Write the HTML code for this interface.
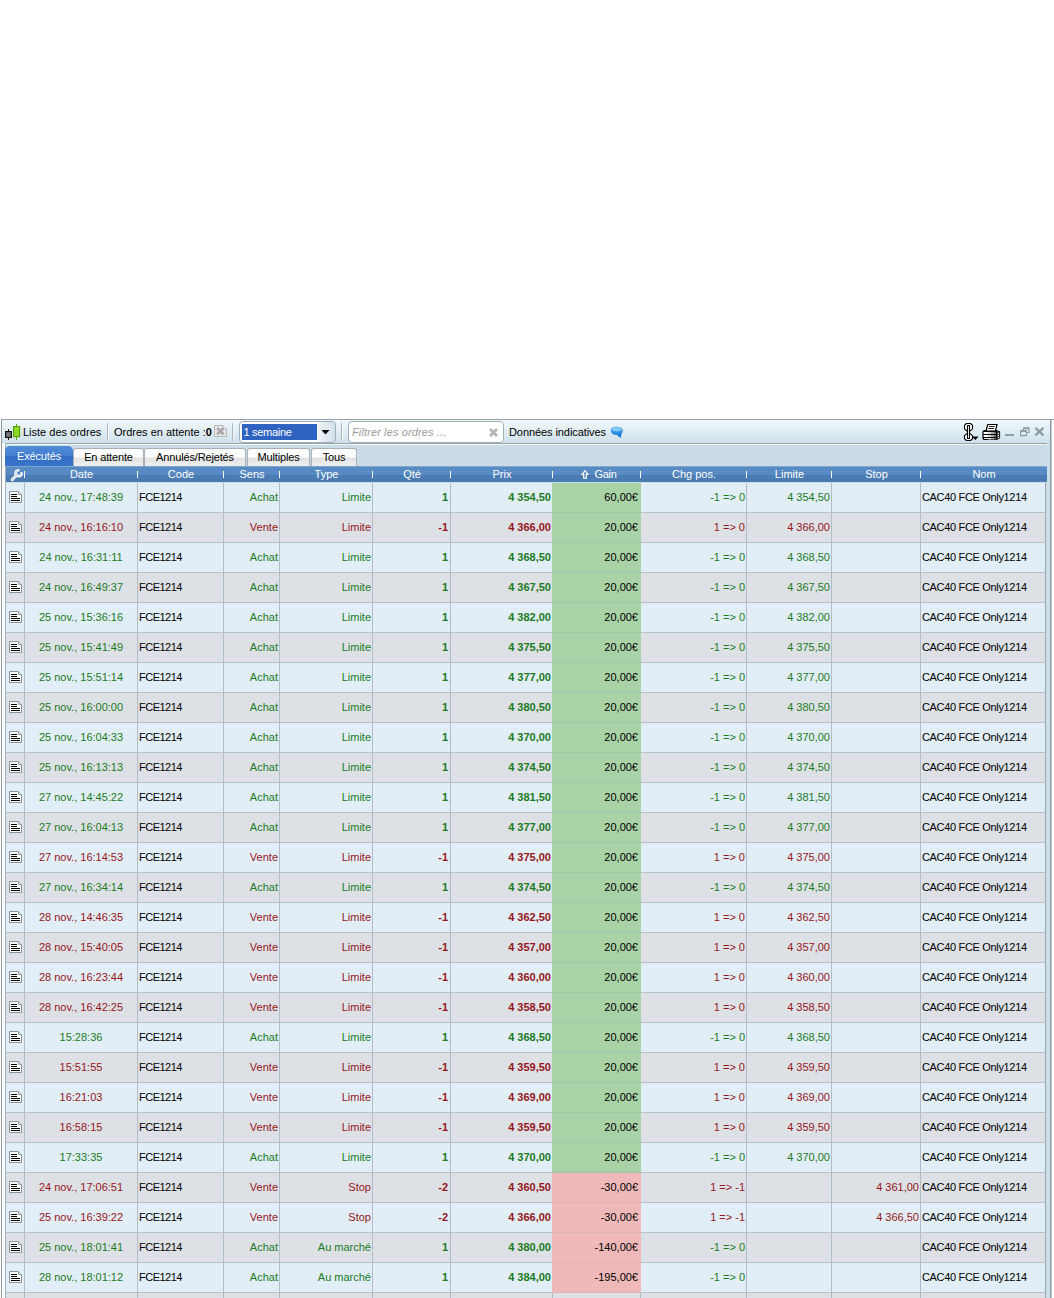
<!DOCTYPE html><html><head><meta charset="utf-8"><title>Liste des ordres</title><style>*{box-sizing:border-box;margin:0;padding:0}
html,body{width:1054px;height:1298px;overflow:hidden;background:#fff}
body{font-family:"Liberation Sans",Arial,sans-serif;font-size:11px;color:#000;position:relative}
.a{position:absolute}
.frame{position:absolute;left:1px;top:419px;width:1050px;height:900px;border-left:1px solid #8f989f;border-right:1px solid #8a98a2;background:#fbfcfd;box-shadow:1px 0 0 #c3ccd3}
.topline{position:absolute;left:1px;top:419px;width:1053px;height:1px;background:#979fa6}
.tbbg{position:absolute;left:2px;top:420px;width:1048px;height:23px;background:linear-gradient(#f1f8fb,#e3eff5 40%,#cfe0ea)}
.rstrip{position:absolute;left:1047px;top:443px;width:3px;height:900px;background:#cedee8}
.panel{position:absolute;left:5px;top:443px;width:1042px;height:900px;background:#cbdce7;border-left:1px solid #a3b0bb;border-top:1px solid #98a4ad}
.panel:before{content:"";position:absolute;left:0;top:0;width:100%;height:1px;background:#f2f7fa}
.tb span,.tb div{position:absolute;white-space:nowrap}
.t{top:426px;line-height:13px;font-size:11px}
.vsep{top:423px;width:1px;height:18px;background:#aab5be;box-shadow:1px 0 0 #f7fafc}
.tab{position:absolute;top:448px;height:18px;border:1px solid #a7b1ba;border-bottom:none;border-radius:3px 3px 0 0;background:linear-gradient(#fff,#fff 45%,#e2e2e2 55%,#efefef);font-size:11px;line-height:17px;text-align:center;color:#000;letter-spacing:-0.15px}
.tab.sel{top:446px;height:20px;border:none;border-radius:5px 5px 0 0;background:linear-gradient(#4f8ad6,#437fd0 50%,#316dc3 52%,#3975ca);color:#fff;line-height:20px}
.hdr{position:absolute;left:6px;top:466px;width:1041px;height:16px;background:linear-gradient(#7fa5d1,#7fa5d1 1px,#588bc3 1px,#588bc3 9px,#4a7bb3 9px,#4a7bb3);color:#fff;font-size:11px}
.hline{position:absolute;left:6px;top:482px;width:1041px;height:1px;background:#eef4f9}
.hc{position:absolute;top:0;height:16px;line-height:16px;text-align:center;white-space:nowrap;padding-left:2px}
.hs{position:absolute;top:5px;width:1px;height:7px;background:#fff}
.wrench{position:absolute;left:4px;top:2px}
.arr{font-family:"DejaVu Sans",sans-serif;font-size:10px}
.grid{position:absolute;left:6px;top:483px;width:1041px;height:830px;overflow:hidden}
.r{position:absolute;left:0;width:1041px;height:30px}
.r.o .c_{background:#e1eef7}
.r.e .c_{background:#dde1e6}
.c_{position:absolute;top:0;height:30px;line-height:29px;border-left:1px solid #b3bcc4;border-bottom:1px solid #b8c0c7;white-space:nowrap;overflow:hidden;padding:0 1px 0 1px}
.r .c_:first-child{border-left:none}
.r .c_:last-child{border-right:1px solid #9aa8b3}
.c{text-align:center}.l{text-align:left}.rt{text-align:right}.b{font-weight:bold}
.g .c_{color:#1b7a1d}.d .c_{color:#96151a}
.r .c_.k{color:#000}
.r .c_.pos{background:#a9d3a6;border-bottom-color:#a0c6a6;border-left-color:#a9d3a6;border-right:1px solid #a9d3a6;z-index:2}
.r .c_.neg{background:#efb9b9;border-bottom-color:#dcb2b6;border-left-color:#efb9b9;border-right:1px solid #efb9b9;z-index:2}
.ic svg{position:absolute;left:3px;top:8px}
.r .c_.k.l{letter-spacing:-0.5px}
.r .c_.k.l.nm{letter-spacing:-0.33px}
.r .c_.q{padding-right:2px}
</style></head><body>
<div class="frame"></div><div class="topline"></div><div class="tbbg"></div><div class="rstrip"></div><div class="panel"></div>
<div class="tb">
<svg class="a" style="left:4px;top:423px" width="18" height="18" viewBox="0 0 18 18"><path d="M4.5 6 V17" stroke="#111" stroke-width="1"/><rect x="1.6" y="8.6" width="5.8" height="5.8" fill="#777b80" stroke="#111" stroke-width="1.2"/><path d="M12.5 1 V17" stroke="#58a600" stroke-width="1"/><rect x="9.6" y="3.6" width="6" height="10" fill="#8fd92b" stroke="#58a600" stroke-width="1.2"/></svg>
<span class="t" style="left:23px">Liste des ordres</span>
<div class="vsep" style="left:107px"></div>
<span class="t" style="left:114px">Ordres en attente :<b>0</b></span>
<svg class="a" style="left:214px;top:425px" width="13" height="12" viewBox="0 0 13 12"><path d="M0.5 0.5 H9 L12.5 4 V11.5 H0.5 Z" fill="#e7e7e7" stroke="#b6b6b6"/><path d="M9 0.5 V4 H12.5" fill="#f6f6f6" stroke="#c2c2c2"/><path d="M3.2 3 L9.6 9.4 M9.6 3 L3.2 9.4" stroke="#aaa" stroke-width="2.7"/></svg>
<div class="vsep" style="left:232px"></div>
<div style="left:239px;top:421px;width:97px;height:22px;border:1px solid #9dafbc;border-radius:4px;background:linear-gradient(90deg,#fff,#fff 78px,#eef3f6 79px,#d3e0e8)"></div>
<div style="left:242px;top:424px;width:75px;height:16px;background:#2f63c2"></div>
<span class="t" style="left:243.5px;top:426px;color:#fff;letter-spacing:-0.3px">1 semaine</span>
<svg class="a" style="left:321px;top:430px" width="9" height="5" viewBox="0 0 9 5"><path d="M0.5 0 H8.5 L4.5 4.6 Z" fill="#000"/></svg>
<div class="vsep" style="left:341px"></div>
<div style="left:348px;top:421px;width:156px;height:22px;border:1px solid #a3b1bc;border-radius:4px;background:#fff"></div>
<span class="t" style="left:352px;color:#9b9b9b;font-style:italic;letter-spacing:0.12px">Filtrer les ordres ...</span>
<svg class="a" style="left:488px;top:427px" width="11" height="11" viewBox="0 0 11 11"><path d="M2 2 L9 9 M9 2 L2 9" stroke="#b4b4b4" stroke-width="2.8"/></svg>
<span class="t" style="left:509px;letter-spacing:-0.08px">Données indicatives</span>
<svg class="a" style="left:610px;top:426px" width="14" height="13" viewBox="0 0 14 13"><path d="M0.8 4.6 C0.8 1.6 3.8 0.8 6.8 0.8 C9.8 0.8 12.8 1.6 12.8 4.6 C12.8 7.4 11.2 8.4 10 8.7 L10.6 12 L7 9 C3.6 9 0.8 7.8 0.8 4.6 Z" fill="#2b93e6"/><ellipse cx="6.8" cy="3.2" rx="5" ry="2.2" fill="#8fd3fb" opacity="0.85"/><path d="M2 7 C4 8.6 9 8.8 11.8 6.6 L10.6 12 L7 9 C5 9 3 8.4 2 7 Z" fill="#1a7ad6"/></svg>
<!-- right icons -->
<svg class="a" style="left:963px;top:422px" width="17" height="20" viewBox="0 0 17 20"><g fill="#fff" stroke="#000" stroke-width="1.1" stroke-linejoin="round"><path d="M3.4 1.5 H7.6 L9.5 3.4 V6.8 L5.5 10.3 L1.5 6.8 V3.4 Z"/><path d="M5.5 10.3 L9.5 13.6 V16.6 L7.6 18.5 H3.4 L1.5 16.6 V13.6 Z"/><rect x="4.5" y="3.5" width="2" height="13"/></g><path d="M9 14.6 H15.6 L12.3 18 Z" fill="#000"/></svg>
<svg class="a" style="left:982px;top:423px" width="19" height="18" viewBox="0 0 19 18"><path d="M1 9 C1 8 2.5 7.6 4 7.6 H14.5 L17.5 9 V15 L14.5 16.5 H3 C1.4 16.5 1 15.5 1 14.5 Z" fill="#fff" stroke="#000" stroke-width="1.2"/><rect x="6" y="8" width="3" height="8.5" fill="#dcdcdc"/><rect x="9" y="8" width="3" height="8.5" fill="#a8a8a8"/><rect x="12" y="8" width="2.5" height="8.5" fill="#707070"/><path d="M14.5 8 L17.5 9 V15 L14.5 16.5 Z" fill="#4a4a4a"/><path d="M5.8 1.5 H15 L13.4 8 H4 Z" fill="#fff" stroke="#000" stroke-width="1.2"/><path d="M7 3.5 H12.6 M6.4 5.5 H12" stroke="#222" stroke-width="1"/><path d="M1 8.5 H14.5 M1 11.5 H14.5 M1 14.5 H14.5" stroke="#000" stroke-width="1.1"/><path d="M14.5 8 V16.5" stroke="#000" stroke-width="1"/><path d="M16 10.5 h1 M16 12.5 h1 M16 14.5 h1" stroke="#ddd" stroke-width="1"/></svg>
<div style="left:1005px;top:434px;width:9px;height:2px;background:#8f9ca7"></div>
<svg class="a" style="left:1020px;top:427px" width="10" height="10" viewBox="0 0 10 10"><g fill="none" stroke="#8f9ca7"><path d="M3.5 3 V1 H9 V5.5 H7" stroke-width="1.2"/><path d="M3.5 1.2 H9" stroke-width="1.8"/><rect x="0.6" y="3.6" width="5.8" height="5" stroke-width="1.2"/><path d="M0.6 4 H6.4" stroke-width="1.8"/></g></svg>
<svg class="a" style="left:1034px;top:426px" width="11" height="11" viewBox="0 0 11 11"><path d="M1.4 1.8 L9.4 9.4 M9.4 1.8 L1.4 9.4" stroke="#8f9ca7" stroke-width="2.3"/></svg>
</div>
<div class="tabs">
<div class="tab sel" style="left:5px;width:68px">Exécutés</div>
<div class="tab" style="left:73px;width:71px">En attente</div>
<div class="tab" style="left:144px;width:102px">Annulés/Rejetés</div>
<div class="tab" style="left:247px;width:63px">Multiples</div>
<div class="tab" style="left:311px;width:46px">Tous</div>
</div>

<div class="hdr">
<div class="hc" style="left:0px;width:18px"><svg class="wrench" width="14" height="14" viewBox="0 0 14 14"><g fill="none" stroke-linecap="round" stroke-linejoin="round"><path d="M2.2 11.6 L6.8 7" stroke="#fff" stroke-width="3"/><path d="M11.6 5.2 A3 3 0 1 1 8.4 2.2" stroke="#fff" stroke-width="2.6"/><path d="M2.2 11.6 L6.8 7" stroke="#c3cfe8" stroke-width="1.1"/><path d="M11.6 5.2 A3 3 0 1 1 8.4 2.2" stroke="#c3cfe8" stroke-width="0.8"/></g></svg></div>
<i class="hs" style="left:18px"></i>
<div class="hc" style="left:18px;width:113px">Date</div>
<i class="hs" style="left:131px"></i>
<div class="hc" style="left:131px;width:86px">Code</div>
<i class="hs" style="left:217px"></i>
<div class="hc" style="left:217px;width:56px">Sens</div>
<i class="hs" style="left:273px"></i>
<div class="hc" style="left:273px;width:93px">Type</div>
<i class="hs" style="left:366px"></i>
<div class="hc" style="left:366px;width:78px">Qté</div>
<i class="hs" style="left:444px"></i>
<div class="hc" style="left:444px;width:102px">Prix</div>
<i class="hs" style="left:546px"></i>
<div class="hc" style="left:546px;width:88px"><svg style="position:absolute;left:28px;top:3px" width="10" height="11" viewBox="0 0 10 11"><path d="M5 1.6 L8 5.4 H6.4 V9.2 H3.6 V5.4 H2 Z" fill="#6a95c8" stroke="#fff" stroke-width="1.15" stroke-linejoin="miter"/></svg><span style="position:absolute;left:42.5px;top:0;letter-spacing:-0.3px">Gain</span></div>
<i class="hs" style="left:634px"></i>
<div class="hc" style="left:634px;width:106px">Chg pos.</div>
<i class="hs" style="left:740px"></i>
<div class="hc" style="left:740px;width:85px">Limite</div>
<i class="hs" style="left:825px"></i>
<div class="hc" style="left:825px;width:89px">Stop</div>
<i class="hs" style="left:914px"></i>
<div class="hc" style="left:914px;width:126px">Nom</div>
</div>
<div class="grid">
<div class="r o g" style="top:0px">
<div class="c_ ic" style="left:0px;width:18px"><svg width="13" height="12" viewBox="0 0 13 12"><path d="M0.5 0.5 H9.5 L12.5 3.5 V11.5 H0.5 Z" fill="#fff" stroke="#8a939c"/><path d="M9.5 0.5 V3.5 H12.5" fill="#d5dde6" stroke="#9aa3ac"/><path d="M2 3.5 H8 M2 5.5 H8 M2 7.5 H11 M2 9.5 H11" stroke="#000" stroke-width="1"/></svg></div>
<div class="c_ c" style="left:18px;width:113px">24 nov., 17:48:39</div>
<div class="c_ l k" style="left:131px;width:86px">FCE1214</div>
<div class="c_ rt" style="left:217px;width:56px">Achat</div>
<div class="c_ rt" style="left:273px;width:93px">Limite</div>
<div class="c_ rt b q" style="left:366px;width:78px">1</div>
<div class="c_ rt b" style="left:444px;width:102px">4 354,50</div>
<div class="c_ rt k pos" style="left:546px;width:89px;padding-right:2px">60,00€</div>
<div class="c_ rt" style="left:634px;width:106px">-1 => 0</div>
<div class="c_ rt" style="left:740px;width:85px">4 354,50</div>
<div class="c_ rt" style="left:825px;width:89px"></div>
<div class="c_ l k nm" style="left:914px;width:126px">CAC40 FCE Only1214</div>
</div>
<div class="r e d" style="top:30px">
<div class="c_ ic" style="left:0px;width:18px"><svg width="13" height="12" viewBox="0 0 13 12"><path d="M0.5 0.5 H9.5 L12.5 3.5 V11.5 H0.5 Z" fill="#fff" stroke="#8a939c"/><path d="M9.5 0.5 V3.5 H12.5" fill="#d5dde6" stroke="#9aa3ac"/><path d="M2 3.5 H8 M2 5.5 H8 M2 7.5 H11 M2 9.5 H11" stroke="#000" stroke-width="1"/></svg></div>
<div class="c_ c" style="left:18px;width:113px">24 nov., 16:16:10</div>
<div class="c_ l k" style="left:131px;width:86px">FCE1214</div>
<div class="c_ rt" style="left:217px;width:56px">Vente</div>
<div class="c_ rt" style="left:273px;width:93px">Limite</div>
<div class="c_ rt b q" style="left:366px;width:78px">-1</div>
<div class="c_ rt b" style="left:444px;width:102px">4 366,00</div>
<div class="c_ rt k pos" style="left:546px;width:89px;padding-right:2px">20,00€</div>
<div class="c_ rt" style="left:634px;width:106px">1 => 0</div>
<div class="c_ rt" style="left:740px;width:85px">4 366,00</div>
<div class="c_ rt" style="left:825px;width:89px"></div>
<div class="c_ l k nm" style="left:914px;width:126px">CAC40 FCE Only1214</div>
</div>
<div class="r o g" style="top:60px">
<div class="c_ ic" style="left:0px;width:18px"><svg width="13" height="12" viewBox="0 0 13 12"><path d="M0.5 0.5 H9.5 L12.5 3.5 V11.5 H0.5 Z" fill="#fff" stroke="#8a939c"/><path d="M9.5 0.5 V3.5 H12.5" fill="#d5dde6" stroke="#9aa3ac"/><path d="M2 3.5 H8 M2 5.5 H8 M2 7.5 H11 M2 9.5 H11" stroke="#000" stroke-width="1"/></svg></div>
<div class="c_ c" style="left:18px;width:113px">24 nov., 16:31:11</div>
<div class="c_ l k" style="left:131px;width:86px">FCE1214</div>
<div class="c_ rt" style="left:217px;width:56px">Achat</div>
<div class="c_ rt" style="left:273px;width:93px">Limite</div>
<div class="c_ rt b q" style="left:366px;width:78px">1</div>
<div class="c_ rt b" style="left:444px;width:102px">4 368,50</div>
<div class="c_ rt k pos" style="left:546px;width:89px;padding-right:2px">20,00€</div>
<div class="c_ rt" style="left:634px;width:106px">-1 => 0</div>
<div class="c_ rt" style="left:740px;width:85px">4 368,50</div>
<div class="c_ rt" style="left:825px;width:89px"></div>
<div class="c_ l k nm" style="left:914px;width:126px">CAC40 FCE Only1214</div>
</div>
<div class="r e g" style="top:90px">
<div class="c_ ic" style="left:0px;width:18px"><svg width="13" height="12" viewBox="0 0 13 12"><path d="M0.5 0.5 H9.5 L12.5 3.5 V11.5 H0.5 Z" fill="#fff" stroke="#8a939c"/><path d="M9.5 0.5 V3.5 H12.5" fill="#d5dde6" stroke="#9aa3ac"/><path d="M2 3.5 H8 M2 5.5 H8 M2 7.5 H11 M2 9.5 H11" stroke="#000" stroke-width="1"/></svg></div>
<div class="c_ c" style="left:18px;width:113px">24 nov., 16:49:37</div>
<div class="c_ l k" style="left:131px;width:86px">FCE1214</div>
<div class="c_ rt" style="left:217px;width:56px">Achat</div>
<div class="c_ rt" style="left:273px;width:93px">Limite</div>
<div class="c_ rt b q" style="left:366px;width:78px">1</div>
<div class="c_ rt b" style="left:444px;width:102px">4 367,50</div>
<div class="c_ rt k pos" style="left:546px;width:89px;padding-right:2px">20,00€</div>
<div class="c_ rt" style="left:634px;width:106px">-1 => 0</div>
<div class="c_ rt" style="left:740px;width:85px">4 367,50</div>
<div class="c_ rt" style="left:825px;width:89px"></div>
<div class="c_ l k nm" style="left:914px;width:126px">CAC40 FCE Only1214</div>
</div>
<div class="r o g" style="top:120px">
<div class="c_ ic" style="left:0px;width:18px"><svg width="13" height="12" viewBox="0 0 13 12"><path d="M0.5 0.5 H9.5 L12.5 3.5 V11.5 H0.5 Z" fill="#fff" stroke="#8a939c"/><path d="M9.5 0.5 V3.5 H12.5" fill="#d5dde6" stroke="#9aa3ac"/><path d="M2 3.5 H8 M2 5.5 H8 M2 7.5 H11 M2 9.5 H11" stroke="#000" stroke-width="1"/></svg></div>
<div class="c_ c" style="left:18px;width:113px">25 nov., 15:36:16</div>
<div class="c_ l k" style="left:131px;width:86px">FCE1214</div>
<div class="c_ rt" style="left:217px;width:56px">Achat</div>
<div class="c_ rt" style="left:273px;width:93px">Limite</div>
<div class="c_ rt b q" style="left:366px;width:78px">1</div>
<div class="c_ rt b" style="left:444px;width:102px">4 382,00</div>
<div class="c_ rt k pos" style="left:546px;width:89px;padding-right:2px">20,00€</div>
<div class="c_ rt" style="left:634px;width:106px">-1 => 0</div>
<div class="c_ rt" style="left:740px;width:85px">4 382,00</div>
<div class="c_ rt" style="left:825px;width:89px"></div>
<div class="c_ l k nm" style="left:914px;width:126px">CAC40 FCE Only1214</div>
</div>
<div class="r e g" style="top:150px">
<div class="c_ ic" style="left:0px;width:18px"><svg width="13" height="12" viewBox="0 0 13 12"><path d="M0.5 0.5 H9.5 L12.5 3.5 V11.5 H0.5 Z" fill="#fff" stroke="#8a939c"/><path d="M9.5 0.5 V3.5 H12.5" fill="#d5dde6" stroke="#9aa3ac"/><path d="M2 3.5 H8 M2 5.5 H8 M2 7.5 H11 M2 9.5 H11" stroke="#000" stroke-width="1"/></svg></div>
<div class="c_ c" style="left:18px;width:113px">25 nov., 15:41:49</div>
<div class="c_ l k" style="left:131px;width:86px">FCE1214</div>
<div class="c_ rt" style="left:217px;width:56px">Achat</div>
<div class="c_ rt" style="left:273px;width:93px">Limite</div>
<div class="c_ rt b q" style="left:366px;width:78px">1</div>
<div class="c_ rt b" style="left:444px;width:102px">4 375,50</div>
<div class="c_ rt k pos" style="left:546px;width:89px;padding-right:2px">20,00€</div>
<div class="c_ rt" style="left:634px;width:106px">-1 => 0</div>
<div class="c_ rt" style="left:740px;width:85px">4 375,50</div>
<div class="c_ rt" style="left:825px;width:89px"></div>
<div class="c_ l k nm" style="left:914px;width:126px">CAC40 FCE Only1214</div>
</div>
<div class="r o g" style="top:180px">
<div class="c_ ic" style="left:0px;width:18px"><svg width="13" height="12" viewBox="0 0 13 12"><path d="M0.5 0.5 H9.5 L12.5 3.5 V11.5 H0.5 Z" fill="#fff" stroke="#8a939c"/><path d="M9.5 0.5 V3.5 H12.5" fill="#d5dde6" stroke="#9aa3ac"/><path d="M2 3.5 H8 M2 5.5 H8 M2 7.5 H11 M2 9.5 H11" stroke="#000" stroke-width="1"/></svg></div>
<div class="c_ c" style="left:18px;width:113px">25 nov., 15:51:14</div>
<div class="c_ l k" style="left:131px;width:86px">FCE1214</div>
<div class="c_ rt" style="left:217px;width:56px">Achat</div>
<div class="c_ rt" style="left:273px;width:93px">Limite</div>
<div class="c_ rt b q" style="left:366px;width:78px">1</div>
<div class="c_ rt b" style="left:444px;width:102px">4 377,00</div>
<div class="c_ rt k pos" style="left:546px;width:89px;padding-right:2px">20,00€</div>
<div class="c_ rt" style="left:634px;width:106px">-1 => 0</div>
<div class="c_ rt" style="left:740px;width:85px">4 377,00</div>
<div class="c_ rt" style="left:825px;width:89px"></div>
<div class="c_ l k nm" style="left:914px;width:126px">CAC40 FCE Only1214</div>
</div>
<div class="r e g" style="top:210px">
<div class="c_ ic" style="left:0px;width:18px"><svg width="13" height="12" viewBox="0 0 13 12"><path d="M0.5 0.5 H9.5 L12.5 3.5 V11.5 H0.5 Z" fill="#fff" stroke="#8a939c"/><path d="M9.5 0.5 V3.5 H12.5" fill="#d5dde6" stroke="#9aa3ac"/><path d="M2 3.5 H8 M2 5.5 H8 M2 7.5 H11 M2 9.5 H11" stroke="#000" stroke-width="1"/></svg></div>
<div class="c_ c" style="left:18px;width:113px">25 nov., 16:00:00</div>
<div class="c_ l k" style="left:131px;width:86px">FCE1214</div>
<div class="c_ rt" style="left:217px;width:56px">Achat</div>
<div class="c_ rt" style="left:273px;width:93px">Limite</div>
<div class="c_ rt b q" style="left:366px;width:78px">1</div>
<div class="c_ rt b" style="left:444px;width:102px">4 380,50</div>
<div class="c_ rt k pos" style="left:546px;width:89px;padding-right:2px">20,00€</div>
<div class="c_ rt" style="left:634px;width:106px">-1 => 0</div>
<div class="c_ rt" style="left:740px;width:85px">4 380,50</div>
<div class="c_ rt" style="left:825px;width:89px"></div>
<div class="c_ l k nm" style="left:914px;width:126px">CAC40 FCE Only1214</div>
</div>
<div class="r o g" style="top:240px">
<div class="c_ ic" style="left:0px;width:18px"><svg width="13" height="12" viewBox="0 0 13 12"><path d="M0.5 0.5 H9.5 L12.5 3.5 V11.5 H0.5 Z" fill="#fff" stroke="#8a939c"/><path d="M9.5 0.5 V3.5 H12.5" fill="#d5dde6" stroke="#9aa3ac"/><path d="M2 3.5 H8 M2 5.5 H8 M2 7.5 H11 M2 9.5 H11" stroke="#000" stroke-width="1"/></svg></div>
<div class="c_ c" style="left:18px;width:113px">25 nov., 16:04:33</div>
<div class="c_ l k" style="left:131px;width:86px">FCE1214</div>
<div class="c_ rt" style="left:217px;width:56px">Achat</div>
<div class="c_ rt" style="left:273px;width:93px">Limite</div>
<div class="c_ rt b q" style="left:366px;width:78px">1</div>
<div class="c_ rt b" style="left:444px;width:102px">4 370,00</div>
<div class="c_ rt k pos" style="left:546px;width:89px;padding-right:2px">20,00€</div>
<div class="c_ rt" style="left:634px;width:106px">-1 => 0</div>
<div class="c_ rt" style="left:740px;width:85px">4 370,00</div>
<div class="c_ rt" style="left:825px;width:89px"></div>
<div class="c_ l k nm" style="left:914px;width:126px">CAC40 FCE Only1214</div>
</div>
<div class="r e g" style="top:270px">
<div class="c_ ic" style="left:0px;width:18px"><svg width="13" height="12" viewBox="0 0 13 12"><path d="M0.5 0.5 H9.5 L12.5 3.5 V11.5 H0.5 Z" fill="#fff" stroke="#8a939c"/><path d="M9.5 0.5 V3.5 H12.5" fill="#d5dde6" stroke="#9aa3ac"/><path d="M2 3.5 H8 M2 5.5 H8 M2 7.5 H11 M2 9.5 H11" stroke="#000" stroke-width="1"/></svg></div>
<div class="c_ c" style="left:18px;width:113px">25 nov., 16:13:13</div>
<div class="c_ l k" style="left:131px;width:86px">FCE1214</div>
<div class="c_ rt" style="left:217px;width:56px">Achat</div>
<div class="c_ rt" style="left:273px;width:93px">Limite</div>
<div class="c_ rt b q" style="left:366px;width:78px">1</div>
<div class="c_ rt b" style="left:444px;width:102px">4 374,50</div>
<div class="c_ rt k pos" style="left:546px;width:89px;padding-right:2px">20,00€</div>
<div class="c_ rt" style="left:634px;width:106px">-1 => 0</div>
<div class="c_ rt" style="left:740px;width:85px">4 374,50</div>
<div class="c_ rt" style="left:825px;width:89px"></div>
<div class="c_ l k nm" style="left:914px;width:126px">CAC40 FCE Only1214</div>
</div>
<div class="r o g" style="top:300px">
<div class="c_ ic" style="left:0px;width:18px"><svg width="13" height="12" viewBox="0 0 13 12"><path d="M0.5 0.5 H9.5 L12.5 3.5 V11.5 H0.5 Z" fill="#fff" stroke="#8a939c"/><path d="M9.5 0.5 V3.5 H12.5" fill="#d5dde6" stroke="#9aa3ac"/><path d="M2 3.5 H8 M2 5.5 H8 M2 7.5 H11 M2 9.5 H11" stroke="#000" stroke-width="1"/></svg></div>
<div class="c_ c" style="left:18px;width:113px">27 nov., 14:45:22</div>
<div class="c_ l k" style="left:131px;width:86px">FCE1214</div>
<div class="c_ rt" style="left:217px;width:56px">Achat</div>
<div class="c_ rt" style="left:273px;width:93px">Limite</div>
<div class="c_ rt b q" style="left:366px;width:78px">1</div>
<div class="c_ rt b" style="left:444px;width:102px">4 381,50</div>
<div class="c_ rt k pos" style="left:546px;width:89px;padding-right:2px">20,00€</div>
<div class="c_ rt" style="left:634px;width:106px">-1 => 0</div>
<div class="c_ rt" style="left:740px;width:85px">4 381,50</div>
<div class="c_ rt" style="left:825px;width:89px"></div>
<div class="c_ l k nm" style="left:914px;width:126px">CAC40 FCE Only1214</div>
</div>
<div class="r e g" style="top:330px">
<div class="c_ ic" style="left:0px;width:18px"><svg width="13" height="12" viewBox="0 0 13 12"><path d="M0.5 0.5 H9.5 L12.5 3.5 V11.5 H0.5 Z" fill="#fff" stroke="#8a939c"/><path d="M9.5 0.5 V3.5 H12.5" fill="#d5dde6" stroke="#9aa3ac"/><path d="M2 3.5 H8 M2 5.5 H8 M2 7.5 H11 M2 9.5 H11" stroke="#000" stroke-width="1"/></svg></div>
<div class="c_ c" style="left:18px;width:113px">27 nov., 16:04:13</div>
<div class="c_ l k" style="left:131px;width:86px">FCE1214</div>
<div class="c_ rt" style="left:217px;width:56px">Achat</div>
<div class="c_ rt" style="left:273px;width:93px">Limite</div>
<div class="c_ rt b q" style="left:366px;width:78px">1</div>
<div class="c_ rt b" style="left:444px;width:102px">4 377,00</div>
<div class="c_ rt k pos" style="left:546px;width:89px;padding-right:2px">20,00€</div>
<div class="c_ rt" style="left:634px;width:106px">-1 => 0</div>
<div class="c_ rt" style="left:740px;width:85px">4 377,00</div>
<div class="c_ rt" style="left:825px;width:89px"></div>
<div class="c_ l k nm" style="left:914px;width:126px">CAC40 FCE Only1214</div>
</div>
<div class="r o d" style="top:360px">
<div class="c_ ic" style="left:0px;width:18px"><svg width="13" height="12" viewBox="0 0 13 12"><path d="M0.5 0.5 H9.5 L12.5 3.5 V11.5 H0.5 Z" fill="#fff" stroke="#8a939c"/><path d="M9.5 0.5 V3.5 H12.5" fill="#d5dde6" stroke="#9aa3ac"/><path d="M2 3.5 H8 M2 5.5 H8 M2 7.5 H11 M2 9.5 H11" stroke="#000" stroke-width="1"/></svg></div>
<div class="c_ c" style="left:18px;width:113px">27 nov., 16:14:53</div>
<div class="c_ l k" style="left:131px;width:86px">FCE1214</div>
<div class="c_ rt" style="left:217px;width:56px">Vente</div>
<div class="c_ rt" style="left:273px;width:93px">Limite</div>
<div class="c_ rt b q" style="left:366px;width:78px">-1</div>
<div class="c_ rt b" style="left:444px;width:102px">4 375,00</div>
<div class="c_ rt k pos" style="left:546px;width:89px;padding-right:2px">20,00€</div>
<div class="c_ rt" style="left:634px;width:106px">1 => 0</div>
<div class="c_ rt" style="left:740px;width:85px">4 375,00</div>
<div class="c_ rt" style="left:825px;width:89px"></div>
<div class="c_ l k nm" style="left:914px;width:126px">CAC40 FCE Only1214</div>
</div>
<div class="r e g" style="top:390px">
<div class="c_ ic" style="left:0px;width:18px"><svg width="13" height="12" viewBox="0 0 13 12"><path d="M0.5 0.5 H9.5 L12.5 3.5 V11.5 H0.5 Z" fill="#fff" stroke="#8a939c"/><path d="M9.5 0.5 V3.5 H12.5" fill="#d5dde6" stroke="#9aa3ac"/><path d="M2 3.5 H8 M2 5.5 H8 M2 7.5 H11 M2 9.5 H11" stroke="#000" stroke-width="1"/></svg></div>
<div class="c_ c" style="left:18px;width:113px">27 nov., 16:34:14</div>
<div class="c_ l k" style="left:131px;width:86px">FCE1214</div>
<div class="c_ rt" style="left:217px;width:56px">Achat</div>
<div class="c_ rt" style="left:273px;width:93px">Limite</div>
<div class="c_ rt b q" style="left:366px;width:78px">1</div>
<div class="c_ rt b" style="left:444px;width:102px">4 374,50</div>
<div class="c_ rt k pos" style="left:546px;width:89px;padding-right:2px">20,00€</div>
<div class="c_ rt" style="left:634px;width:106px">-1 => 0</div>
<div class="c_ rt" style="left:740px;width:85px">4 374,50</div>
<div class="c_ rt" style="left:825px;width:89px"></div>
<div class="c_ l k nm" style="left:914px;width:126px">CAC40 FCE Only1214</div>
</div>
<div class="r o d" style="top:420px">
<div class="c_ ic" style="left:0px;width:18px"><svg width="13" height="12" viewBox="0 0 13 12"><path d="M0.5 0.5 H9.5 L12.5 3.5 V11.5 H0.5 Z" fill="#fff" stroke="#8a939c"/><path d="M9.5 0.5 V3.5 H12.5" fill="#d5dde6" stroke="#9aa3ac"/><path d="M2 3.5 H8 M2 5.5 H8 M2 7.5 H11 M2 9.5 H11" stroke="#000" stroke-width="1"/></svg></div>
<div class="c_ c" style="left:18px;width:113px">28 nov., 14:46:35</div>
<div class="c_ l k" style="left:131px;width:86px">FCE1214</div>
<div class="c_ rt" style="left:217px;width:56px">Vente</div>
<div class="c_ rt" style="left:273px;width:93px">Limite</div>
<div class="c_ rt b q" style="left:366px;width:78px">-1</div>
<div class="c_ rt b" style="left:444px;width:102px">4 362,50</div>
<div class="c_ rt k pos" style="left:546px;width:89px;padding-right:2px">20,00€</div>
<div class="c_ rt" style="left:634px;width:106px">1 => 0</div>
<div class="c_ rt" style="left:740px;width:85px">4 362,50</div>
<div class="c_ rt" style="left:825px;width:89px"></div>
<div class="c_ l k nm" style="left:914px;width:126px">CAC40 FCE Only1214</div>
</div>
<div class="r e d" style="top:450px">
<div class="c_ ic" style="left:0px;width:18px"><svg width="13" height="12" viewBox="0 0 13 12"><path d="M0.5 0.5 H9.5 L12.5 3.5 V11.5 H0.5 Z" fill="#fff" stroke="#8a939c"/><path d="M9.5 0.5 V3.5 H12.5" fill="#d5dde6" stroke="#9aa3ac"/><path d="M2 3.5 H8 M2 5.5 H8 M2 7.5 H11 M2 9.5 H11" stroke="#000" stroke-width="1"/></svg></div>
<div class="c_ c" style="left:18px;width:113px">28 nov., 15:40:05</div>
<div class="c_ l k" style="left:131px;width:86px">FCE1214</div>
<div class="c_ rt" style="left:217px;width:56px">Vente</div>
<div class="c_ rt" style="left:273px;width:93px">Limite</div>
<div class="c_ rt b q" style="left:366px;width:78px">-1</div>
<div class="c_ rt b" style="left:444px;width:102px">4 357,00</div>
<div class="c_ rt k pos" style="left:546px;width:89px;padding-right:2px">20,00€</div>
<div class="c_ rt" style="left:634px;width:106px">1 => 0</div>
<div class="c_ rt" style="left:740px;width:85px">4 357,00</div>
<div class="c_ rt" style="left:825px;width:89px"></div>
<div class="c_ l k nm" style="left:914px;width:126px">CAC40 FCE Only1214</div>
</div>
<div class="r o d" style="top:480px">
<div class="c_ ic" style="left:0px;width:18px"><svg width="13" height="12" viewBox="0 0 13 12"><path d="M0.5 0.5 H9.5 L12.5 3.5 V11.5 H0.5 Z" fill="#fff" stroke="#8a939c"/><path d="M9.5 0.5 V3.5 H12.5" fill="#d5dde6" stroke="#9aa3ac"/><path d="M2 3.5 H8 M2 5.5 H8 M2 7.5 H11 M2 9.5 H11" stroke="#000" stroke-width="1"/></svg></div>
<div class="c_ c" style="left:18px;width:113px">28 nov., 16:23:44</div>
<div class="c_ l k" style="left:131px;width:86px">FCE1214</div>
<div class="c_ rt" style="left:217px;width:56px">Vente</div>
<div class="c_ rt" style="left:273px;width:93px">Limite</div>
<div class="c_ rt b q" style="left:366px;width:78px">-1</div>
<div class="c_ rt b" style="left:444px;width:102px">4 360,00</div>
<div class="c_ rt k pos" style="left:546px;width:89px;padding-right:2px">20,00€</div>
<div class="c_ rt" style="left:634px;width:106px">1 => 0</div>
<div class="c_ rt" style="left:740px;width:85px">4 360,00</div>
<div class="c_ rt" style="left:825px;width:89px"></div>
<div class="c_ l k nm" style="left:914px;width:126px">CAC40 FCE Only1214</div>
</div>
<div class="r e d" style="top:510px">
<div class="c_ ic" style="left:0px;width:18px"><svg width="13" height="12" viewBox="0 0 13 12"><path d="M0.5 0.5 H9.5 L12.5 3.5 V11.5 H0.5 Z" fill="#fff" stroke="#8a939c"/><path d="M9.5 0.5 V3.5 H12.5" fill="#d5dde6" stroke="#9aa3ac"/><path d="M2 3.5 H8 M2 5.5 H8 M2 7.5 H11 M2 9.5 H11" stroke="#000" stroke-width="1"/></svg></div>
<div class="c_ c" style="left:18px;width:113px">28 nov., 16:42:25</div>
<div class="c_ l k" style="left:131px;width:86px">FCE1214</div>
<div class="c_ rt" style="left:217px;width:56px">Vente</div>
<div class="c_ rt" style="left:273px;width:93px">Limite</div>
<div class="c_ rt b q" style="left:366px;width:78px">-1</div>
<div class="c_ rt b" style="left:444px;width:102px">4 358,50</div>
<div class="c_ rt k pos" style="left:546px;width:89px;padding-right:2px">20,00€</div>
<div class="c_ rt" style="left:634px;width:106px">1 => 0</div>
<div class="c_ rt" style="left:740px;width:85px">4 358,50</div>
<div class="c_ rt" style="left:825px;width:89px"></div>
<div class="c_ l k nm" style="left:914px;width:126px">CAC40 FCE Only1214</div>
</div>
<div class="r o g" style="top:540px">
<div class="c_ ic" style="left:0px;width:18px"><svg width="13" height="12" viewBox="0 0 13 12"><path d="M0.5 0.5 H9.5 L12.5 3.5 V11.5 H0.5 Z" fill="#fff" stroke="#8a939c"/><path d="M9.5 0.5 V3.5 H12.5" fill="#d5dde6" stroke="#9aa3ac"/><path d="M2 3.5 H8 M2 5.5 H8 M2 7.5 H11 M2 9.5 H11" stroke="#000" stroke-width="1"/></svg></div>
<div class="c_ c" style="left:18px;width:113px">15:28:36</div>
<div class="c_ l k" style="left:131px;width:86px">FCE1214</div>
<div class="c_ rt" style="left:217px;width:56px">Achat</div>
<div class="c_ rt" style="left:273px;width:93px">Limite</div>
<div class="c_ rt b q" style="left:366px;width:78px">1</div>
<div class="c_ rt b" style="left:444px;width:102px">4 368,50</div>
<div class="c_ rt k pos" style="left:546px;width:89px;padding-right:2px">20,00€</div>
<div class="c_ rt" style="left:634px;width:106px">-1 => 0</div>
<div class="c_ rt" style="left:740px;width:85px">4 368,50</div>
<div class="c_ rt" style="left:825px;width:89px"></div>
<div class="c_ l k nm" style="left:914px;width:126px">CAC40 FCE Only1214</div>
</div>
<div class="r e d" style="top:570px">
<div class="c_ ic" style="left:0px;width:18px"><svg width="13" height="12" viewBox="0 0 13 12"><path d="M0.5 0.5 H9.5 L12.5 3.5 V11.5 H0.5 Z" fill="#fff" stroke="#8a939c"/><path d="M9.5 0.5 V3.5 H12.5" fill="#d5dde6" stroke="#9aa3ac"/><path d="M2 3.5 H8 M2 5.5 H8 M2 7.5 H11 M2 9.5 H11" stroke="#000" stroke-width="1"/></svg></div>
<div class="c_ c" style="left:18px;width:113px">15:51:55</div>
<div class="c_ l k" style="left:131px;width:86px">FCE1214</div>
<div class="c_ rt" style="left:217px;width:56px">Vente</div>
<div class="c_ rt" style="left:273px;width:93px">Limite</div>
<div class="c_ rt b q" style="left:366px;width:78px">-1</div>
<div class="c_ rt b" style="left:444px;width:102px">4 359,50</div>
<div class="c_ rt k pos" style="left:546px;width:89px;padding-right:2px">20,00€</div>
<div class="c_ rt" style="left:634px;width:106px">1 => 0</div>
<div class="c_ rt" style="left:740px;width:85px">4 359,50</div>
<div class="c_ rt" style="left:825px;width:89px"></div>
<div class="c_ l k nm" style="left:914px;width:126px">CAC40 FCE Only1214</div>
</div>
<div class="r o d" style="top:600px">
<div class="c_ ic" style="left:0px;width:18px"><svg width="13" height="12" viewBox="0 0 13 12"><path d="M0.5 0.5 H9.5 L12.5 3.5 V11.5 H0.5 Z" fill="#fff" stroke="#8a939c"/><path d="M9.5 0.5 V3.5 H12.5" fill="#d5dde6" stroke="#9aa3ac"/><path d="M2 3.5 H8 M2 5.5 H8 M2 7.5 H11 M2 9.5 H11" stroke="#000" stroke-width="1"/></svg></div>
<div class="c_ c" style="left:18px;width:113px">16:21:03</div>
<div class="c_ l k" style="left:131px;width:86px">FCE1214</div>
<div class="c_ rt" style="left:217px;width:56px">Vente</div>
<div class="c_ rt" style="left:273px;width:93px">Limite</div>
<div class="c_ rt b q" style="left:366px;width:78px">-1</div>
<div class="c_ rt b" style="left:444px;width:102px">4 369,00</div>
<div class="c_ rt k pos" style="left:546px;width:89px;padding-right:2px">20,00€</div>
<div class="c_ rt" style="left:634px;width:106px">1 => 0</div>
<div class="c_ rt" style="left:740px;width:85px">4 369,00</div>
<div class="c_ rt" style="left:825px;width:89px"></div>
<div class="c_ l k nm" style="left:914px;width:126px">CAC40 FCE Only1214</div>
</div>
<div class="r e d" style="top:630px">
<div class="c_ ic" style="left:0px;width:18px"><svg width="13" height="12" viewBox="0 0 13 12"><path d="M0.5 0.5 H9.5 L12.5 3.5 V11.5 H0.5 Z" fill="#fff" stroke="#8a939c"/><path d="M9.5 0.5 V3.5 H12.5" fill="#d5dde6" stroke="#9aa3ac"/><path d="M2 3.5 H8 M2 5.5 H8 M2 7.5 H11 M2 9.5 H11" stroke="#000" stroke-width="1"/></svg></div>
<div class="c_ c" style="left:18px;width:113px">16:58:15</div>
<div class="c_ l k" style="left:131px;width:86px">FCE1214</div>
<div class="c_ rt" style="left:217px;width:56px">Vente</div>
<div class="c_ rt" style="left:273px;width:93px">Limite</div>
<div class="c_ rt b q" style="left:366px;width:78px">-1</div>
<div class="c_ rt b" style="left:444px;width:102px">4 359,50</div>
<div class="c_ rt k pos" style="left:546px;width:89px;padding-right:2px">20,00€</div>
<div class="c_ rt" style="left:634px;width:106px">1 => 0</div>
<div class="c_ rt" style="left:740px;width:85px">4 359,50</div>
<div class="c_ rt" style="left:825px;width:89px"></div>
<div class="c_ l k nm" style="left:914px;width:126px">CAC40 FCE Only1214</div>
</div>
<div class="r o g" style="top:660px">
<div class="c_ ic" style="left:0px;width:18px"><svg width="13" height="12" viewBox="0 0 13 12"><path d="M0.5 0.5 H9.5 L12.5 3.5 V11.5 H0.5 Z" fill="#fff" stroke="#8a939c"/><path d="M9.5 0.5 V3.5 H12.5" fill="#d5dde6" stroke="#9aa3ac"/><path d="M2 3.5 H8 M2 5.5 H8 M2 7.5 H11 M2 9.5 H11" stroke="#000" stroke-width="1"/></svg></div>
<div class="c_ c" style="left:18px;width:113px">17:33:35</div>
<div class="c_ l k" style="left:131px;width:86px">FCE1214</div>
<div class="c_ rt" style="left:217px;width:56px">Achat</div>
<div class="c_ rt" style="left:273px;width:93px">Limite</div>
<div class="c_ rt b q" style="left:366px;width:78px">1</div>
<div class="c_ rt b" style="left:444px;width:102px">4 370,00</div>
<div class="c_ rt k pos" style="left:546px;width:89px;padding-right:2px">20,00€</div>
<div class="c_ rt" style="left:634px;width:106px">-1 => 0</div>
<div class="c_ rt" style="left:740px;width:85px">4 370,00</div>
<div class="c_ rt" style="left:825px;width:89px"></div>
<div class="c_ l k nm" style="left:914px;width:126px">CAC40 FCE Only1214</div>
</div>
<div class="r e d" style="top:690px">
<div class="c_ ic" style="left:0px;width:18px"><svg width="13" height="12" viewBox="0 0 13 12"><path d="M0.5 0.5 H9.5 L12.5 3.5 V11.5 H0.5 Z" fill="#fff" stroke="#8a939c"/><path d="M9.5 0.5 V3.5 H12.5" fill="#d5dde6" stroke="#9aa3ac"/><path d="M2 3.5 H8 M2 5.5 H8 M2 7.5 H11 M2 9.5 H11" stroke="#000" stroke-width="1"/></svg></div>
<div class="c_ c" style="left:18px;width:113px">24 nov., 17:06:51</div>
<div class="c_ l k" style="left:131px;width:86px">FCE1214</div>
<div class="c_ rt" style="left:217px;width:56px">Vente</div>
<div class="c_ rt" style="left:273px;width:93px">Stop</div>
<div class="c_ rt b q" style="left:366px;width:78px">-2</div>
<div class="c_ rt b" style="left:444px;width:102px">4 360,50</div>
<div class="c_ rt k neg" style="left:546px;width:89px;padding-right:2px">-30,00€</div>
<div class="c_ rt" style="left:634px;width:106px">1 => -1</div>
<div class="c_ rt" style="left:740px;width:85px"></div>
<div class="c_ rt" style="left:825px;width:89px">4 361,00</div>
<div class="c_ l k nm" style="left:914px;width:126px">CAC40 FCE Only1214</div>
</div>
<div class="r o d" style="top:720px">
<div class="c_ ic" style="left:0px;width:18px"><svg width="13" height="12" viewBox="0 0 13 12"><path d="M0.5 0.5 H9.5 L12.5 3.5 V11.5 H0.5 Z" fill="#fff" stroke="#8a939c"/><path d="M9.5 0.5 V3.5 H12.5" fill="#d5dde6" stroke="#9aa3ac"/><path d="M2 3.5 H8 M2 5.5 H8 M2 7.5 H11 M2 9.5 H11" stroke="#000" stroke-width="1"/></svg></div>
<div class="c_ c" style="left:18px;width:113px">25 nov., 16:39:22</div>
<div class="c_ l k" style="left:131px;width:86px">FCE1214</div>
<div class="c_ rt" style="left:217px;width:56px">Vente</div>
<div class="c_ rt" style="left:273px;width:93px">Stop</div>
<div class="c_ rt b q" style="left:366px;width:78px">-2</div>
<div class="c_ rt b" style="left:444px;width:102px">4 366,00</div>
<div class="c_ rt k neg" style="left:546px;width:89px;padding-right:2px">-30,00€</div>
<div class="c_ rt" style="left:634px;width:106px">1 => -1</div>
<div class="c_ rt" style="left:740px;width:85px"></div>
<div class="c_ rt" style="left:825px;width:89px">4 366,50</div>
<div class="c_ l k nm" style="left:914px;width:126px">CAC40 FCE Only1214</div>
</div>
<div class="r e g" style="top:750px">
<div class="c_ ic" style="left:0px;width:18px"><svg width="13" height="12" viewBox="0 0 13 12"><path d="M0.5 0.5 H9.5 L12.5 3.5 V11.5 H0.5 Z" fill="#fff" stroke="#8a939c"/><path d="M9.5 0.5 V3.5 H12.5" fill="#d5dde6" stroke="#9aa3ac"/><path d="M2 3.5 H8 M2 5.5 H8 M2 7.5 H11 M2 9.5 H11" stroke="#000" stroke-width="1"/></svg></div>
<div class="c_ c" style="left:18px;width:113px">25 nov., 18:01:41</div>
<div class="c_ l k" style="left:131px;width:86px">FCE1214</div>
<div class="c_ rt" style="left:217px;width:56px">Achat</div>
<div class="c_ rt" style="left:273px;width:93px">Au marché</div>
<div class="c_ rt b q" style="left:366px;width:78px">1</div>
<div class="c_ rt b" style="left:444px;width:102px">4 380,00</div>
<div class="c_ rt k neg" style="left:546px;width:89px;padding-right:2px">-140,00€</div>
<div class="c_ rt" style="left:634px;width:106px">-1 => 0</div>
<div class="c_ rt" style="left:740px;width:85px"></div>
<div class="c_ rt" style="left:825px;width:89px"></div>
<div class="c_ l k nm" style="left:914px;width:126px">CAC40 FCE Only1214</div>
</div>
<div class="r o g" style="top:780px">
<div class="c_ ic" style="left:0px;width:18px"><svg width="13" height="12" viewBox="0 0 13 12"><path d="M0.5 0.5 H9.5 L12.5 3.5 V11.5 H0.5 Z" fill="#fff" stroke="#8a939c"/><path d="M9.5 0.5 V3.5 H12.5" fill="#d5dde6" stroke="#9aa3ac"/><path d="M2 3.5 H8 M2 5.5 H8 M2 7.5 H11 M2 9.5 H11" stroke="#000" stroke-width="1"/></svg></div>
<div class="c_ c" style="left:18px;width:113px">28 nov., 18:01:12</div>
<div class="c_ l k" style="left:131px;width:86px">FCE1214</div>
<div class="c_ rt" style="left:217px;width:56px">Achat</div>
<div class="c_ rt" style="left:273px;width:93px">Au marché</div>
<div class="c_ rt b q" style="left:366px;width:78px">1</div>
<div class="c_ rt b" style="left:444px;width:102px">4 384,00</div>
<div class="c_ rt k neg" style="left:546px;width:89px;padding-right:2px">-195,00€</div>
<div class="c_ rt" style="left:634px;width:106px">-1 => 0</div>
<div class="c_ rt" style="left:740px;width:85px"></div>
<div class="c_ rt" style="left:825px;width:89px"></div>
<div class="c_ l k nm" style="left:914px;width:126px">CAC40 FCE Only1214</div>
</div>
<div class="r e " style="top:810px">
<div class="c_ " style="left:0px;width:18px"></div>
<div class="c_ " style="left:18px;width:113px"></div>
<div class="c_ " style="left:131px;width:86px"></div>
<div class="c_ " style="left:217px;width:56px"></div>
<div class="c_ " style="left:273px;width:93px"></div>
<div class="c_ " style="left:366px;width:78px"></div>
<div class="c_ " style="left:444px;width:102px"></div>
<div class="c_ " style="left:546px;width:88px"></div>
<div class="c_ " style="left:634px;width:106px"></div>
<div class="c_ " style="left:740px;width:85px"></div>
<div class="c_ " style="left:825px;width:89px"></div>
<div class="c_ " style="left:914px;width:126px"></div>
</div>
</div>
</body></html>
